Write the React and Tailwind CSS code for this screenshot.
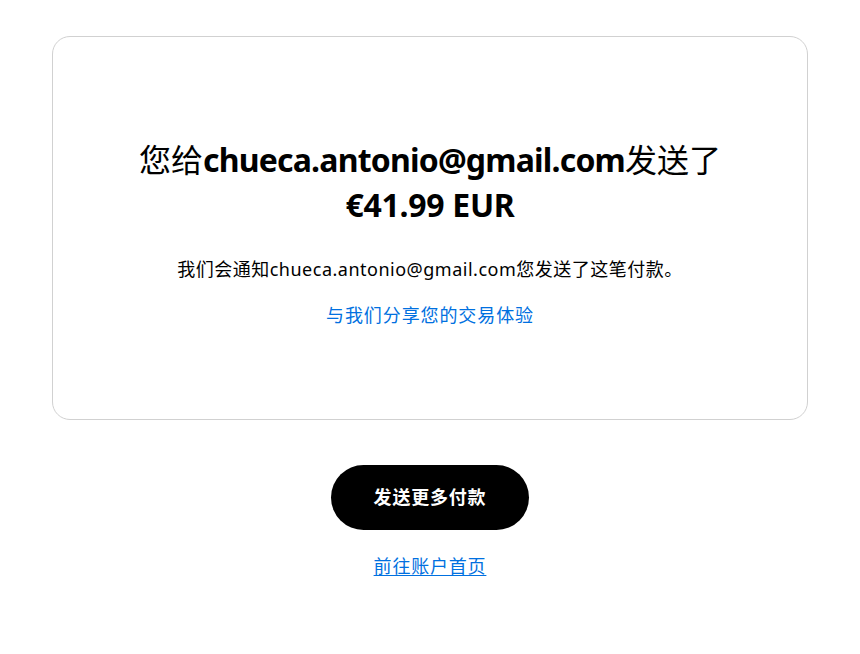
export default function App() {
  const font = "font-['Noto_Sans','Noto_Sans_CJK_SC',sans-serif]"
  return (
    <div className={`min-h-screen bg-white text-black ${font}`}>
      <div className="px-[52px] pt-[36px]">
        <div className="border border-[#d1d1d1] rounded-[18px] pt-[100px] pb-[90px] flex flex-col items-center text-center">
          <h1 className="text-[32px] leading-[45px]">
            <span className="font-normal">您给</span>
            <span className="font-bold tracking-[-0.8px]">chueca.antonio@gmail.com</span>
            <span className="font-normal">发送了</span>
            <br />
            <span className="font-bold tracking-[-0.3px]">€41.99 EUR</span>
          </h1>
          <p className="mt-[29px] text-[18px] leading-[27px] tracking-[0.5px]">
            我们会通知chueca.antonio@gmail.com您发送了这笔付款。
          </p>
          <a href="#" className="mt-[19px] text-[18px] leading-[27px] tracking-[0.9px] text-[#0070e0]">
            与我们分享您的交易体验
          </a>
        </div>
      </div>
      <div className="flex flex-col items-center">
        <button className="mt-[45px] w-[198px] h-[65px] rounded-full bg-black text-white text-[18px] font-semibold tracking-[0.8px]">
          发送更多付款
        </button>
        <a href="#" className="mt-[23px] text-[18px] leading-[27px] tracking-[0.8px] text-[#0070e0] underline underline-offset-2">
          前往账户首页
        </a>
      </div>
    </div>
  )
}
